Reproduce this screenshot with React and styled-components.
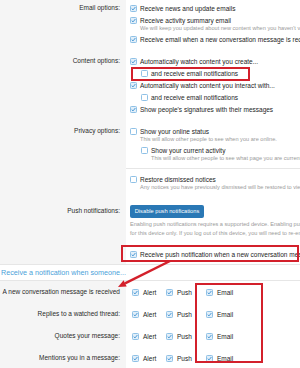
import styled, { createGlobalStyle } from "styled-components";

const GlobalStyle = createGlobalStyle`
  html, body {
    margin: 0;
    padding: 0;
  }
  body {
    width: 300px;
    height: 368px;
    overflow: hidden;
    background: #fff;
    font-family: "Liberation Sans", Arial, sans-serif;
  }
`;

const Page = styled.div`
  position: relative;
  width: 300px;
  height: 368px;
  overflow: hidden;
  background: #fff;
  color: #1c1c1c;
`;

const Form = styled.div`
  margin-top: -3px;
`;

const Row = styled.div`
  display: grid;
  grid-template-columns: 126px 1fr;
`;

const Label = styled.div`
  background: #f5f5f5;
  text-align: right;
  padding: ${(p) => p.$top ?? 5}px 6px 0 0;
  font-size: 6.5px;
  line-height: 12px;
  color: #2a2a2a;
  white-space: nowrap;
`;

const Content = styled.div`
  min-width: 0;
  padding: ${(p) => (p.$separated ? 4 : 5)}px 0 ${(p) => p.$bottom ?? 5}px 4px;
  border-top: ${(p) => (p.$separated ? "1px solid #e6e6e6" : "none")};
`;

const Option = styled.div`
  display: flex;
  align-items: center;
  gap: 3px;
  height: 12px;
  margin-left: ${(p) => (p.$nested ? 11 : 0)}px;
  font-size: 6.5px;
  white-space: nowrap;
`;

const Hint = styled.div`
  margin: -2px 0 1px ${(p) => (p.$nested ? 21 : 10)}px;
  font-size: 5.6px;
  line-height: 8px;
  color: #9a9a9a;
  white-space: nowrap;
`;

const PushButton = styled.button`
  display: block;
  width: 74px;
  height: 13px;
  margin-top: 3px;
  padding: 0;
  border: none;
  border-radius: 2px;
  background: #2a78b5;
  color: #fff;
  font-family: inherit;
  font-size: 5.7px;
  line-height: 13px;
`;

const PushHint = styled.div`
  margin-top: 2px;
  font-size: 5.6px;
  line-height: 9px;
  color: #9a9a9a;
  white-space: nowrap;
`;

const SectionHeading = styled.h3`
  margin: 0;
  padding: 3px 0 2px 1px;
  border-top: 1px solid #e6e6e6;
  border-bottom: 1px solid #e6e6e6;
  background: #fff;
  color: #4a9fd9;
  font-size: 7.2px;
  font-weight: normal;
  line-height: 10px;
  white-space: nowrap;
`;

const NotifyLabel = styled(Label)`
  padding: 0 6px 0 0;
  line-height: 22px;
`;

const Choices = styled.div`
  display: flex;
  align-items: center;
  height: 22px;
  padding-left: 6px;
  font-size: 6.5px;
`;

const Choice = styled.div`
  display: flex;
  align-items: center;
  gap: 4px;
  width: ${(p) => p.$w}px;
  white-space: nowrap;
`;

const Callout = styled.div`
  position: absolute;
  top: ${(p) => p.$top}px;
  left: ${(p) => p.$left}px;
  width: ${(p) => p.$w}px;
  height: ${(p) => p.$h}px;
  box-sizing: border-box;
  border: 2px solid #d3202b;
  pointer-events: none;
`;

const Arrow = styled.svg`
  position: absolute;
  top: 255px;
  left: 110px;
  width: 70px;
  height: 40px;
  pointer-events: none;
`;

const Box = styled.svg`
  flex: none;
  display: block;
  width: 7px;
  height: 7px;
`;

const Checkbox = ({ checked }) => (
  <Box viewBox="0 0 7 7">
    <rect
      x="0.5"
      y="0.5"
      width="6"
      height="6"
      rx="0.8"
      fill={checked ? "#e2eff9" : "#fff"}
      stroke="#8fc1e6"
    />
    {checked && (
      <path d="M1.7 3.6 L3 4.9 L5.4 2" fill="none" stroke="#3a8ed1" strokeWidth="0.9" />
    )}
  </Box>
);

const notifications = [
  "A new conversation message is received",
  "Replies to a watched thread:",
  "Quotes your message:",
  "Mentions you in a message:",
];

export default function App() {
  return (
    <Page>
      <GlobalStyle />
      <Form>
        <Row>
          <Label>Email options:</Label>
          <Content>
            <Option>
              <Checkbox checked />
              Receive news and update emails
            </Option>
            <Option>
              <Checkbox checked />
              Receive activity summary email
            </Option>
            <Hint>We will keep you updated about new content when you haven't visited for a while.</Hint>
            <Option>
              <Checkbox checked />
              Receive email when a new conversation message is received
            </Option>
          </Content>
        </Row>

        <Row>
          <Label>Content options:</Label>
          <Content>
            <Option>
              <Checkbox checked />
              Automatically watch content you create...
            </Option>
            <Option $nested>
              <Checkbox />
              and receive email notifications
            </Option>
            <Option>
              <Checkbox checked />
              Automatically watch content you interact with...
            </Option>
            <Option $nested>
              <Checkbox />
              and receive email notifications
            </Option>
            <Option>
              <Checkbox checked />
              Show people's signatures with their messages
            </Option>
          </Content>
        </Row>

        <Row>
          <Label>Privacy options:</Label>
          <Content>
            <Option>
              <Checkbox />
              Show your online status
            </Option>
            <Hint>This will allow other people to see when you are online.</Hint>
            <Option $nested>
              <Checkbox />
              Show your current activity
            </Option>
            <Hint $nested>This will allow other people to see what page you are currently viewing.</Hint>
          </Content>
        </Row>

        <Row>
          <Label />
          <Content $separated>
            <Option>
              <Checkbox />
              Restore dismissed notices
            </Option>
            <Hint>Any notices you have previously dismissed will be restored to view.</Hint>
          </Content>
        </Row>

        <Row>
          <Label $top={8}>Push notifications:</Label>
          <Content>
            <PushButton>Disable push notifications</PushButton>
            <PushHint>
              Enabling push notifications requires a supported device. Enabling push notifications will enable them
              <br />
              for this device only. If you log out of this device, you will need to re-enable push notifications.
            </PushHint>
          </Content>
        </Row>

        <Row>
          <Label />
          <Content $bottom={4}>
            <Option>
              <Checkbox checked />
              Receive push notification when a new conversation message is received
            </Option>
          </Content>
        </Row>

        <SectionHeading>Receive a notification when someone...</SectionHeading>

        {notifications.map((text) => (
          <Row key={text}>
            <NotifyLabel>{text}</NotifyLabel>
            <Choices>
              <Choice $w={34}>
                <Checkbox checked />
                Alert
              </Choice>
              <Choice $w={40}>
                <Checkbox checked />
                Push
              </Choice>
              <Choice $w={40}>
                <Checkbox checked />
                Email
              </Choice>
            </Choices>
          </Row>
        ))}
      </Form>

      <Callout $top={67} $left={131} $w={119} $h={14} />
      <Callout $top={245} $left={121} $w={178} $h={17} />
      <Callout $top={283} $left={195} $w={68} $h={80} />
      <Arrow viewBox="0 0 70 40">
        <line x1="60" y1="6" x2="15" y2="28.4" stroke="#d3202b" strokeWidth="2.4" />
        <polygon points="8,32 13.6,25.3 16.7,31.6" fill="#d3202b" />
      </Arrow>
    </Page>
  );
}
